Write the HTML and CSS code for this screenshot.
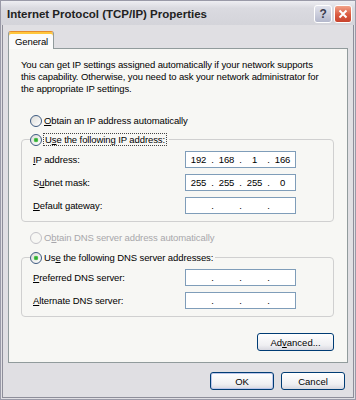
FILE: index.html
```html
<!DOCTYPE html>
<html lang="en">
  <head>
    <meta charset="UTF-8" />
    <title>Internet Protocol (TCP/IP) Properties</title>
    <link rel="stylesheet" href="styles.css">
  </head>
  <body>
    <div class="window">
      <div class="titlebar">
        <span class="title">Internet Protocol (TCP/IP) Properties</span>
        <span class="cap-btn help-btn">?</span>
        <span class="cap-btn close-btn">
          <svg width="10" height="10" viewBox="0 0 10 10">
            <path d="M1.5 1.5 L8.5 8.5 M8.5 1.5 L1.5 8.5" stroke="#fff" stroke-width="2" />
          </svg>
        </span>
      </div>

      <div class="client">
        <div class="tabs">
          <div class="tab">General</div>
        </div>

        <div class="panel">
          <p class="intro">
            You can get IP settings assigned automatically if your network supports<br>
            this capability. Otherwise, you need to ask your network administrator for<br>
            the appropriate IP settings.
          </p>

          <div class="opt opt-first">
            <span class="radio"></span>
            <span><u>O</u>btain an IP address automatically</span>
          </div>

          <fieldset class="group">
            <legend>
              <span class="opt">
                <span class="radio on"></span>
                <span class="focus">U<u>s</u>e the following IP address:</span>
              </span>
            </legend>
            <div class="field">
              <span><u>I</u>P address:</span>
              <div class="ipbox">
                <span class="oct">192</span><span class="dot">.</span><span class="oct">168</span><span class="dot">.</span><span class="oct">1</span><span class="dot">.</span><span class="oct">166</span>
              </div>
            </div>
            <div class="field">
              <span>S<u>u</u>bnet mask:</span>
              <div class="ipbox">
                <span class="oct">255</span><span class="dot">.</span><span class="oct">255</span><span class="dot">.</span><span class="oct">255</span><span class="dot">.</span><span class="oct">0</span>
              </div>
            </div>
            <div class="field">
              <span><u>D</u>efault gateway:</span>
              <div class="ipbox">
                <span class="oct"></span><span class="dot">.</span><span class="oct"></span><span class="dot">.</span><span class="oct"></span><span class="dot">.</span><span class="oct"></span>
              </div>
            </div>
          </fieldset>

          <div class="opt opt-dns disabled">
            <span class="radio"></span>
            <span>O<u>b</u>tain DNS server address automatically</span>
          </div>

          <fieldset class="group group-dns">
            <legend>
              <span class="opt">
                <span class="radio on"></span>
                <span class="plain">Us<u>e</u> the following DNS server addresses:</span>
              </span>
            </legend>
            <div class="field">
              <span><u>P</u>referred DNS server:</span>
              <div class="ipbox">
                <span class="oct"></span><span class="dot">.</span><span class="oct"></span><span class="dot">.</span><span class="oct"></span><span class="dot">.</span><span class="oct"></span>
              </div>
            </div>
            <div class="field">
              <span><u>A</u>lternate DNS server:</span>
              <div class="ipbox">
                <span class="oct"></span><span class="dot">.</span><span class="oct"></span><span class="dot">.</span><span class="oct"></span><span class="dot">.</span><span class="oct"></span>
              </div>
            </div>
          </fieldset>

          <div class="actions">
            <button class="btn btn-adv">Ad<u>v</u>anced...</button>
          </div>
        </div>

        <div class="footer">
          <button class="btn btn-default">OK</button>
          <button class="btn">Cancel</button>
        </div>
      </div>
    </div>
  </body>
</html>
```

FILE: styles.css
```css
body {
  margin: 0;
  font-family: "Liberation Sans", Arial, sans-serif;
  font-size: 9.5px;
  letter-spacing: -0.1px;
  color: #000;
}
.window {
  width: 356px;
  height: 400px;
  box-sizing: border-box;
  border: 1px solid #9a9aa8;
  background: #e0dfe3;
  display: flex;
  flex-direction: column;
}
.titlebar {
  height: 24px;
  box-sizing: border-box;
  display: flex;
  align-items: center;
  padding: 1px 3px 0 6px;
  background: linear-gradient(#eeeef2, #dadae0 30%, #d4d4da);
}
.title {
  flex: 1;
  font-weight: bold;
  font-size: 11.5px;
  letter-spacing: 0;
  color: #222;
}
.cap-btn {
  width: 18px;
  height: 18px;
  box-sizing: border-box;
  margin-left: 2px;
  border: 1px solid #fff;
  border-radius: 3px;
  display: flex;
  align-items: center;
  justify-content: center;
}
.help-btn {
  background: linear-gradient(#e2e3ec, #b4b8cc);
  color: #3a3c4e;
  font-size: 12px;
  font-weight: bold;
}
.close-btn {
  background: linear-gradient(#f2a288, #da5a40 55%, #c8432e);
}

.client {
  flex: 1;
  margin: 0 1px 1px;
  border: 1px solid #8e8e9a;
  border-top: none;
  padding: 0 5px;
  display: flex;
  flex-direction: column;
}
.tabs {
  display: flex;
  padding-top: 6px;
}
.tab {
  height: 18px;
  box-sizing: border-box;
  padding: 1px 5px 0 6px;
  margin-bottom: -1px;
  position: relative;
  display: flex;
  align-items: center;
  border: 1px solid #919b9c;
  border-top-color: #e68b2c;
  border-bottom: none;
  border-radius: 3px 3px 0 0;
  box-shadow: inset 0 2px 0 #ffc73c;
  background: #fbfbfb;
}
.panel {
  flex: 1;
  border: 1px solid #919b9c;
  background: #f7f7f4;
  padding: 10px 13px 0 12px;
  display: flex;
  flex-direction: column;
}
.intro {
  margin: 0;
  line-height: 12px;
  white-space: nowrap;
}

.opt {
  display: flex;
  align-items: center;
  height: 13px;
  gap: 2px;
}
.opt-first {
  margin: 19px 0 0 9px;
}
.opt-dns {
  margin: 9px 0 0 9px;
}
.disabled {
  color: #a8a7ab;
}
.radio {
  width: 12px;
  height: 12px;
  box-sizing: border-box;
  border: 1px solid #3d5a80;
  border-radius: 50%;
  background: linear-gradient(135deg, #dcdcd8, #fff);
}
.radio.on {
  background: radial-gradient(circle, #1e9a1e 0, #58c858 2px, transparent 2.6px),
    linear-gradient(135deg, #dcdcd8, #fff);
}
.disabled .radio {
  border-color: #c4c3c8;
  background: #f7f7f4;
}
.focus {
  padding: 0 1px;
  margin-left: -1px;
  border: 1px dotted #444;
  line-height: 11px;
}

.group {
  margin: 6px 0 0;
  padding: 5px 37px 7px 8px;
  border: 1px solid #d0d0d0;
  border-radius: 4px;
  min-width: 0;
}
.group-dns {
  margin-top: 7px;
}
.group legend {
  padding: 0 2px 0 0;
}
.field {
  display: flex;
  align-items: center;
  justify-content: space-between;
  padding-left: 3px;
}
.field + .field {
  margin-top: 6px;
}
.ipbox {
  width: 111px;
  height: 17px;
  box-sizing: border-box;
  border: 1px solid #7f9db9;
  background: #fff;
  display: flex;
  align-items: center;
}
.oct {
  width: 25px;
  text-align: center;
}
.dot {
  width: 3px;
  text-align: center;
}

.actions {
  display: flex;
  justify-content: flex-end;
  margin-top: 16px;
}
.btn {
  width: 64px;
  height: 18px;
  box-sizing: border-box;
  padding: 0;
  border: 1px solid #003c74;
  border-radius: 3px;
  background: linear-gradient(#ffffff, #efeff2 70%, #d8d8e0);
  font: inherit;
  color: #000;
}
.btn-adv {
  width: 77px;
}
.btn-default {
  box-shadow: inset 0 0 0 1px #bcc6ea;
}
.footer {
  display: flex;
  justify-content: flex-end;
  gap: 7px;
  padding: 9px 3px 7px 0;
}
```
